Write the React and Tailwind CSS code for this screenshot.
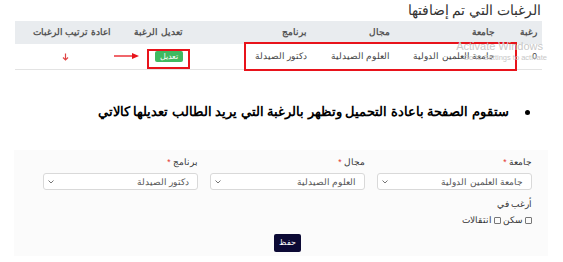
import React from "react";

const Chevron = () => (
  <svg width="6" height="4" viewBox="0 0 6 4" className="shrink-0">
    <path d="M0.5 0.5 L3 3 L5.5 0.5" fill="none" stroke="#666" strokeWidth="0.9" />
  </svg>
);

const FakeSelect = ({ label, value }) => (
  <div className="flex flex-col">
    <div className="h-[12px] text-[8.5px] leading-[12px] text-[#333] mb-[5px]">
      {label} <span className="text-[#e3342f]">*</span>
    </div>
    <div className="h-[17px] border border-[#d9d9d9] rounded-[3px] bg-white flex items-center justify-between pr-[8px] pl-[4px]">
      <span className="text-[8.5px] leading-[12px] text-[#555]">{value}</span>
      <Chevron />
    </div>
  </div>
);

export default function App() {
  const font = "font-['Liberation_Sans',sans-serif]";
  return (
    <div dir="rtl" className={`relative w-[563px] h-[262px] overflow-hidden bg-white ${font}`}>
      <div className="pr-[22px] pt-[1px] h-[21px] text-[13.5px] leading-[19px] text-[#333]">
        الرغبات التي تم إضافتها
      </div>

      <div className="mr-[21px] ml-[15px]">
        <div className="grid grid-cols-[41px_105px_83px_124px_72px_1fr] h-[23px] items-center bg-[#e9ecef] text-[9px] font-bold text-[#555]">
          <div className="pr-[5px]">رغبة</div>
          <div className="pr-[6px]">جامعة</div>
          <div className="pr-[6px]">مجال</div>
          <div className="pr-[6px]">برنامج</div>
          <div className="pr-[6px]">تعديل الرغبة</div>
          <div className="pr-[6px]">اعادة ترتيب الرغبات</div>
        </div>
        <div className="grid grid-cols-[41px_105px_83px_124px_72px_1fr] h-[26px] items-center border-b border-[#e3e3e3] text-[8.5px] text-[#444]">
          <div className="pr-[5px]">0</div>
          <div className="pr-[6px]">جامعة العلمين الدولية</div>
          <div className="pr-[6px]">العلوم الصيدلية</div>
          <div className="pr-[6px]">دكتور الصيدلة</div>
          <div className="pr-[6px] flex">
            <span className="w-[28px] h-[11px] rounded-[2px] bg-[#3fb960] text-white text-[7.5px] leading-[11px] text-center">
              تعديل
            </span>
          </div>
          <div className="flex justify-end pl-[47px]">
            <svg width="7" height="8" viewBox="0 0 7 8">
              <path d="M3.5 0.5 V7 M1 4.5 L3.5 7 L6 4.5" fill="none" stroke="#e04444" strokeWidth="1.2" />
            </svg>
          </div>
        </div>
      </div>

      <div className="mt-[34px] flex items-center pr-[33px] h-[16px]">
        <span className="w-[5px] h-[5px] rounded-full bg-black ml-[16px]" />
        <span className="text-[12.6px] font-bold text-black leading-[16px]">
          ستقوم الصفحة باعادة التحميل وتظهر بالرغبة التي يريد الطالب تعديلها كالاتي
        </span>
      </div>

      <div className="mt-[30px] mr-[15px] ml-[14px] bg-[#fbfbfb] pr-[16px] pl-[29px] pt-[6px] pb-[4px]">
        <div className="grid grid-cols-3 gap-x-[12px]">
          <FakeSelect label="جامعة" value="جامعة العلمين الدولية" />
          <FakeSelect label="مجال" value="العلوم الصيدلية" />
          <FakeSelect label="برنامج" value="دكتور الصيدلة" />
        </div>
        <div className="mt-[8px] text-[8.5px] leading-[12px] text-[#333]">أرغب في</div>
        <div className="mt-[4px] flex items-center gap-[2px] text-[8.5px] leading-[12px] text-[#333]">
          <span className="w-[7px] h-[7px] border border-[#777] rounded-[1px]" />
          <span>سكن</span>
          <span className="w-[7px] h-[7px] border border-[#777] rounded-[1px]" />
          <span>انتقالات</span>
        </div>
        <div className="mt-[8px] flex justify-center">
          <div className="w-[27px] h-[18px] rounded-[2px] bg-[#0c0a35] text-white text-[8px] leading-[18px] text-center">
            حفظ
          </div>
        </div>
      </div>

      {/* annotations */}
      <div className="absolute left-[244px] top-[42px] w-[273px] h-[29px] border-2 border-[#e8131b]" />
      <div className="absolute left-[147px] top-[49px] w-[43px] h-[20px] border-2 border-[#e8131b]" />
      <svg className="absolute left-[114px] top-[52px]" width="26" height="8" viewBox="0 0 26 8">
        <path d="M0 4 H20" stroke="#e8131b" strokeWidth="1.3" />
        <path d="M18 1 L25 4 L18 7 Z" fill="#e8131b" />
      </svg>

      {/* watermark */}
      <div dir="ltr" className="absolute right-[20px] top-[40px] text-[11px] leading-[12px] text-[#c8c8c8] font-['Liberation_Sans',sans-serif]">
        Activate Windows
      </div>
      <div dir="ltr" className="absolute right-[16px] top-[53px] text-[7.5px] leading-[10px] text-[#c8c8c8] font-['Liberation_Sans',sans-serif]">
        Go to Settings to activate
      </div>
    </div>
  );
}
